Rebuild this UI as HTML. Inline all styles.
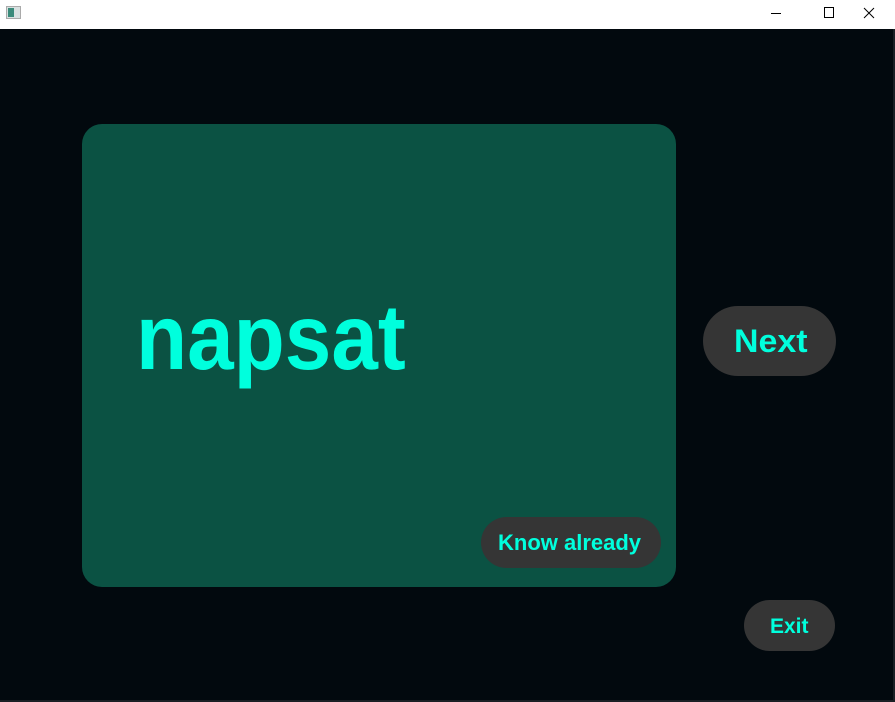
<!DOCTYPE html>
<html><head><style>
html,body{margin:0;padding:0;width:895px;height:702px;overflow:hidden;background:#02090e;font-family:"Liberation Sans",sans-serif;}
.tb{position:absolute;left:0;top:0;width:895px;height:29px;background:#fff;}
.c{position:absolute;background:#0b5243;border-radius:20px;left:82px;top:124px;width:594px;height:463px;}
.t{position:absolute;font-weight:bold;color:#00ffdd;white-space:nowrap;line-height:1;}
.b{position:absolute;background:#353535;border-radius:40px;}
</style></head><body>
<div class="tb">
<svg width="895" height="29" style="position:absolute;left:0;top:0">
<rect x="6.5" y="6.5" width="14" height="12" fill="#d8e0e0" stroke="#aaa"/>
<rect x="8" y="8" width="6" height="9" fill="#3a8a7a"/>
<rect x="824.5" y="7.5" width="9" height="10" fill="none" stroke="#000"/>
<path d="M864 8 L874 18 M874 8 L864 18" stroke="#000"/>
<line x1="771" y1="13.5" x2="781" y2="13.5" stroke="#000"/>
</svg>
</div>
<div class="c"></div>
<div class="t" style="left:136px;top:291px;font-size:93px;transform:scaleX(0.9);transform-origin:left top;">napsat</div>
<div class="b" style="left:703px;top:306px;width:133px;height:70px;border-radius:35px;"></div>
<div class="t" style="left:734px;top:325px;font-size:32px;transform:scaleX(1.06);transform-origin:left top;">Next</div>
<div class="b" style="left:481px;top:517px;width:180px;height:51px;border-radius:26px;"></div>
<div class="t" style="left:498px;top:532px;font-size:22px;">Know already</div>
<div class="b" style="left:744px;top:600px;width:91px;height:51px;border-radius:26px;"></div>
<div class="t" style="left:770px;top:616px;font-size:21px;">Exit</div>
<div style="position:absolute;left:893px;top:29px;width:2px;height:673px;background:#1a1f24"></div>
<div style="position:absolute;left:0;top:700px;width:895px;height:2px;background:#1a1f24"></div>
</body></html>
